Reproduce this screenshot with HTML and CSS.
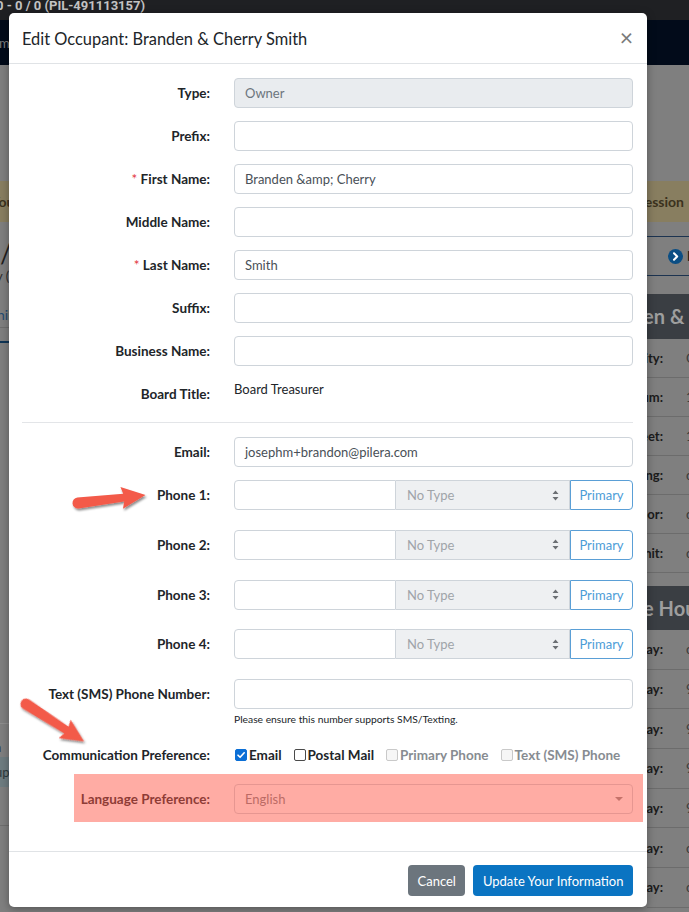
FILE: index.html
```html
<!DOCTYPE html>
<html lang="en">
<head>
<meta charset="utf-8">
<title>Edit Occupant</title>
<link rel="stylesheet" href="styles.css">
</head>
<body>
<div class="app">
  <div class="topbar"><span>0 - 0 / 0 (PIL-491113157)</span></div>
  <div class="navbar"><span class="nav-item">Home</span></div>
  <div class="alert"><span class="alert-left">You</span><span class="alert-right">Session</span></div>
  <div class="cols">
    <div class="left">
      <div class="page-title">/</div>
      <div class="page-sub">y (</div>
      <div class="tabs"><span class="tab">hi</span></div>
      <div class="tab-line"></div>
      <div class="lower">
        <div class="lower-text">in</div>
        <div class="lower-band">up</div>
        <div class="lower-line"></div>
      </div>
    </div>
    <div class="right">
      <div class="nav-row">
        <svg class="chev" width="15" height="15" viewBox="0 0 15 15"><circle cx="7.5" cy="7.5" r="7.5" fill="#0b4e84"/><path d="M6 4.2 L9.2 7.5 L6 10.8" fill="none" stroke="#fff" stroke-width="2" stroke-linecap="round" stroke-linejoin="round"/></svg>
        <span class="nav-next">L</span>
      </div>
      <div class="card">
        <div class="card-head"><span class="head-1">Branden &amp; Cherry Smith</span></div>
        <div class="card-row"><span class="k">City:</span><span class="v">C</span></div>
        <div class="card-row"><span class="k">Unit Num:</span><span class="v">1</span></div>
        <div class="card-row"><span class="k">Street:</span><span class="v">1</span></div>
        <div class="card-row"><span class="k">Building:</span><span class="v">c</span></div>
        <div class="card-row"><span class="k">Floor:</span><span class="v">c</span></div>
        <div class="card-row"><span class="k">Unit:</span><span class="v">c</span></div>
      </div>
      <div class="card card2">
        <div class="card-head"><span class="head-2">Office Hours</span></div>
        <div class="card-row"><span class="k">Monday:</span><span class="v">c</span></div>
        <div class="card-row"><span class="k">Tuesday:</span><span class="v">9</span></div>
        <div class="card-row"><span class="k">Wednesday:</span><span class="v">9</span></div>
        <div class="card-row"><span class="k">Thursday:</span><span class="v">9</span></div>
        <div class="card-row"><span class="k">Friday:</span><span class="v">9</span></div>
        <div class="card-row"><span class="k">Saturday:</span><span class="v">c</span></div>
        <div class="card-row"><span class="k">Sunday:</span><span class="v">c</span></div>
      </div>
    </div>
  </div>
</div>

<div class="modal">
  <div class="modal-header">
    <h5 class="modal-title">Edit Occupant: Branden &amp; Cherry Smith</h5>
    <span class="close">×</span>
  </div>
  <div class="modal-body">
    <div class="row"><div class="lbl">Type:</div><div class="input disabled">Owner</div></div>
    <div class="row"><div class="lbl">Prefix:</div><div class="input"></div></div>
    <div class="row"><div class="lbl"><span class="req">*</span> First Name:</div><div class="input">Branden &amp;amp; Cherry</div></div>
    <div class="row"><div class="lbl">Middle Name:</div><div class="input"></div></div>
    <div class="row"><div class="lbl"><span class="req">*</span> Last Name:</div><div class="input">Smith</div></div>
    <div class="row"><div class="lbl">Suffix:</div><div class="input"></div></div>
    <div class="row"><div class="lbl">Business Name:</div><div class="input"></div></div>
    <div class="row"><div class="lbl">Board Title:</div><div class="static">Board Treasurer</div></div>
    <hr class="divider">
    <div class="row"><div class="lbl">Email:</div><div class="input">josephm+brandon@pilera.com</div></div>

    <div class="row phone"><div class="lbl">Phone 1:</div>
      <div class="group">
        <div class="input num"></div>
        <div class="sel"><span>No Type</span><svg width="7" height="11" viewBox="0 0 7 11"><path d="M3.5 0.5 L6.5 4 L0.5 4 Z M3.5 10.5 L6.5 7 L0.5 7 Z" fill="#6b6f73"/></svg></div>
        <div class="pbtn">Primary</div>
      </div>
    </div>
    <div class="row phone"><div class="lbl">Phone 2:</div>
      <div class="group">
        <div class="input num"></div>
        <div class="sel"><span>No Type</span><svg width="7" height="11" viewBox="0 0 7 11"><path d="M3.5 0.5 L6.5 4 L0.5 4 Z M3.5 10.5 L6.5 7 L0.5 7 Z" fill="#6b6f73"/></svg></div>
        <div class="pbtn">Primary</div>
      </div>
    </div>
    <div class="row phone"><div class="lbl">Phone 3:</div>
      <div class="group">
        <div class="input num"></div>
        <div class="sel"><span>No Type</span><svg width="7" height="11" viewBox="0 0 7 11"><path d="M3.5 0.5 L6.5 4 L0.5 4 Z M3.5 10.5 L6.5 7 L0.5 7 Z" fill="#6b6f73"/></svg></div>
        <div class="pbtn">Primary</div>
      </div>
    </div>
    <div class="row phone"><div class="lbl">Phone 4:</div>
      <div class="group">
        <div class="input num"></div>
        <div class="sel"><span>No Type</span><svg width="7" height="11" viewBox="0 0 7 11"><path d="M3.5 0.5 L6.5 4 L0.5 4 Z M3.5 10.5 L6.5 7 L0.5 7 Z" fill="#6b6f73"/></svg></div>
        <div class="pbtn">Primary</div>
      </div>
    </div>

    <div class="row sms"><div class="lbl">Text (SMS) Phone Number:</div>
      <div class="field">
        <div class="input"></div>
        <div class="help">Please ensure this number supports SMS/Texting.</div>
      </div>
    </div>

    <div class="row comm"><div class="lbl">Communication Preference:</div>
      <div class="checks">
        <span class="check"><span class="cb checked"><svg width="10" height="10" viewBox="0 0 10 10"><path d="M2 5.2 L4.1 7.3 L8.2 2.8" fill="none" stroke="#fff" stroke-width="1.6" stroke-linecap="round" stroke-linejoin="round"/></svg></span>Email</span>
        <span class="check"><span class="cb"></span>Postal Mail</span>
        <span class="check off"><span class="cb"></span>Primary Phone</span>
        <span class="check off"><span class="cb"></span>Text (SMS) Phone</span>
      </div>
    </div>

    <div class="row lang"><div class="lbl">Language Preference:</div>
      <div class="input select"><span>English</span><svg width="8" height="4" viewBox="0 0 8 4"><path d="M0 0 L8 0 L4 4 Z" fill="#8d8d8d"/></svg></div>
    </div>
  </div>
  <div class="modal-footer">
    <span class="btn btn-cancel">Cancel</span>
    <span class="btn btn-primary">Update Your Information</span>
  </div>
</div>

<svg class="annotations" width="689" height="912" viewBox="0 0 689 912">
  <defs>
    <filter id="shadow" x="-30%" y="-50%" width="160%" height="200%">
      <feDropShadow dx="1.2" dy="2" stdDeviation="1.3" flood-color="#000" flood-opacity="0.45"/>
    </filter>
  </defs>
  <rect x="74" y="774" width="569" height="48" fill="#ff5545" fill-opacity="0.49"/>
  <g filter="url(#shadow)">
    <path transform="translate(78 503) rotate(-6.7)" d="M0,-5.5 L46,-4 L44,-11 L68,0 L44,11 L46,4 L0,5.5 A5.5,5.5 0 0 1 0,-5.5 Z" fill="#f35a4a"/>
    <path transform="translate(26 704) rotate(32.8)" d="M0,-5.5 L48,-4 L46,-11 L69,0 L46,11 L48,4 L0,5.5 A5.5,5.5 0 0 1 0,-5.5 Z" fill="#f35a4a"/>
  </g>
</svg>
</body>
</html>
```

FILE: styles.css
```css
* { box-sizing: border-box; }
html, body { margin: 0; padding: 0; }
body {
  width: 689px;
  height: 912px;
  overflow: hidden;
  position: relative;
  background: #7f7f7f;
  font-family: Lato, "Open Sans", "DejaVu Sans", sans-serif;
  font-size: 13px;
  color: #212529;
}

/* ---------- background page (dimmed) ---------- */
.app { width: 689px; }
.topbar {
  height: 20px;
  background: #1f2023;
  color: #c3c3c3;
  font: bold 13px "Liberation Sans Narrow", "Roboto", sans-serif;
  line-height: 12px;
  white-space: nowrap;
  overflow: hidden;
}
.topbar span { display: block; margin-left: -4px; }
.navbar {
  height: 45px;
  background: #020b1a;
  display: flex;
  align-items: center;
  overflow: hidden;
  white-space: nowrap;
}
.nav-item { color: #7e7e7e; margin-left: -18px; font-size: 13px; }
.alert {
  margin-top: 116px;
  height: 41px;
  background: #887e60;
  display: flex;
  justify-content: space-between;
  align-items: center;
  color: #3b321d;
  font-size: 14px;
  font-weight: 700;
  white-space: nowrap;
}
.alert-left { margin-left: -9px; }
.alert-right { margin-right: 5px; }
.cols { display: grid; grid-template-columns: 647px 42px; }

.left { overflow: hidden; white-space: nowrap; }
.page-title { margin-top: 16px; font-size: 26px; line-height: 30px; color: #1f1f1f; }
.page-sub { font-size: 13px; line-height: 16px; color: #2a2a2a; margin-left: -4px; }
.tabs { margin-top: 20px; height: 24px; line-height: 22px; border-bottom: 1px solid #6e6e6e; }
.tab { color: #1f4a72; font-size: 14px; margin-left: -3px; }
.tab-line { margin-top: 13px; height: 2px; width: 60px; background: #0f3556; }
.lower { margin-top: 380px; border-top: 1px solid #8d8d8d; }
.lower-text { line-height: 20px; padding-top: 13px; color: #2a2a2a; font-size: 13px; margin-left: -4px; }
.lower-band { height: 30px; line-height: 30px; background: #6e7c80; color: #2e3a3d; margin-left: 0; }
.lower-band, .lower-text { text-indent: -5px; }
.lower-line { margin-top: 38px; border-top: 1px solid #6e6e6e; }

.right { overflow: hidden; white-space: nowrap; }
.nav-row {
  margin-top: 14px;
  height: 40px;
  border-top: 1px solid #1c3350;
  border-bottom: 1px solid #1c3350;
  display: flex;
  align-items: center;
}
.chev { margin-left: 21px; flex: none; }
.nav-next { margin-left: 4px; color: #1b1b1b; font-weight: 700; }
.card { margin-top: 18px; }
.card2 { margin-top: 13px; }
.card-head {
  height: 45px;
  background: #3a3e43;
  color: #9e9e9e;
  font-size: 20px;
  font-weight: 700;
  line-height: 45px;
}
.card2 .card-head { height: 44px; line-height: 44px; }
.head-1 { display: block; text-indent: -57px; }
.head-2 { display: block; text-indent: -48px; }
.card-row {
  height: 39px;
  border-bottom: 1px solid #6c6c6c;
  display: grid;
  grid-template-columns: 16px 1fr;
  column-gap: 23px;
  align-items: center;
}
.card2 .card-row { height: 39.7px; }
.k { display: flex; justify-content: flex-end; font-weight: 700; color: #1b1b1b; }
.v { color: #3a3a3a; }

/* ---------- modal ---------- */
.modal {
  position: absolute;
  left: 9px;
  top: 13px;
  width: 638px;
  background: #fff;
  border-radius: 5px;
  box-shadow: 0 2px 8px rgba(0, 0, 0, 0.35);
}
.modal-header {
  height: 51px;
  padding: 0 14px 0 13px;
  display: flex;
  align-items: center;
  justify-content: space-between;
  border-bottom: 1px solid #e0e3e6;
}
.modal-title { margin: 0; font-size: 16.4px; font-weight: 400; color: #212529; }
.close { font-size: 23px; color: #7a7a7a; line-height: 1; margin-top: -2px; }

.modal-body { padding: 14px 14px 37px 13px; }
.row {
  display: grid;
  grid-template-columns: 188px 1fr;
  column-gap: 24px;
  align-items: start;
  margin-bottom: 13px;
}
.lbl {
  text-align: right;
  font-weight: 700;
  font-size: 13.5px;
  line-height: 30px;
  white-space: nowrap;
  color: #212529;
}
.req { color: #e2333b; font-weight: 400; }
.input {
  height: 30px;
  border: 1px solid #ced4da;
  border-radius: 4px;
  padding: 0 10px;
  display: flex;
  align-items: center;
  color: #495057;
  background: #fff;
}
.input.disabled { background: #e9ecef; color: #6c757d; }
.static { line-height: 20px; color: #212529; }
.divider { margin: 0 0 14px; border: 0; border-top: 1px solid #e3e5e8; }

.row.phone { margin-bottom: 19.75px; }
.group { display: flex; height: 30px; }
.group .input.num { width: 162px; border-radius: 4px 0 0 4px; }
.sel {
  width: 174px;
  height: 30px;
  background: #eef0f2;
  border: 1px solid #ced4da;
  border-left: 0;
  color: #9fa4a9;
  padding: 0 10px 0 11px;
  display: flex;
  align-items: center;
  justify-content: space-between;
}
.pbtn {
  flex: 1;
  height: 30px;
  border: 1px solid #5a9fd6;
  border-radius: 0 4px 4px 0;
  color: #4c9cd7;
  display: flex;
  align-items: center;
  justify-content: center;
}

.row.sms { margin-bottom: 19px; }
.help { font-size: 10.3px; line-height: 14px; margin-top: 3px; color: #212529; }

.row.comm { margin-bottom: 19px; }
.row.comm .lbl { line-height: 20px; }
.checks { display: flex; align-items: center; height: 20px; padding-left: 1px; white-space: nowrap; }
.check { display: inline-flex; align-items: center; font-weight: 700; font-size: 13.5px; margin-right: 12px; }
.check.off { color: #878c91; }
.cb {
  width: 12px;
  height: 12px;
  border: 1px solid #4a4a4a;
  border-radius: 2px;
  margin-right: 2px;
  display: inline-flex;
  align-items: center;
  justify-content: center;
  background: #fff;
}
.cb.checked { background: #0b6fd6; border-color: #0b6fd6; }
.check.off .cb { border-color: #c9c9c9; background: #f6f6f6; }

.row.lang { margin-bottom: 0; }
.input.select { justify-content: space-between; color: #7a7f84; padding-right: 9px; }

.modal-footer {
  border-top: 1px solid #e0e3e6;
  padding: 13px 14px 11px;
  display: flex;
  justify-content: flex-end;
  gap: 8px;
}
.btn {
  height: 31px;
  padding: 0 9.5px;
  border-radius: 4px;
  color: #fff;
  display: inline-flex;
  align-items: center;
}
.btn-cancel { background: #6c757d; }
.btn-primary { background: #0a74c2; }

/* ---------- annotation layer ---------- */
.annotations { position: absolute; left: 0; top: 0; pointer-events: none; }
```
